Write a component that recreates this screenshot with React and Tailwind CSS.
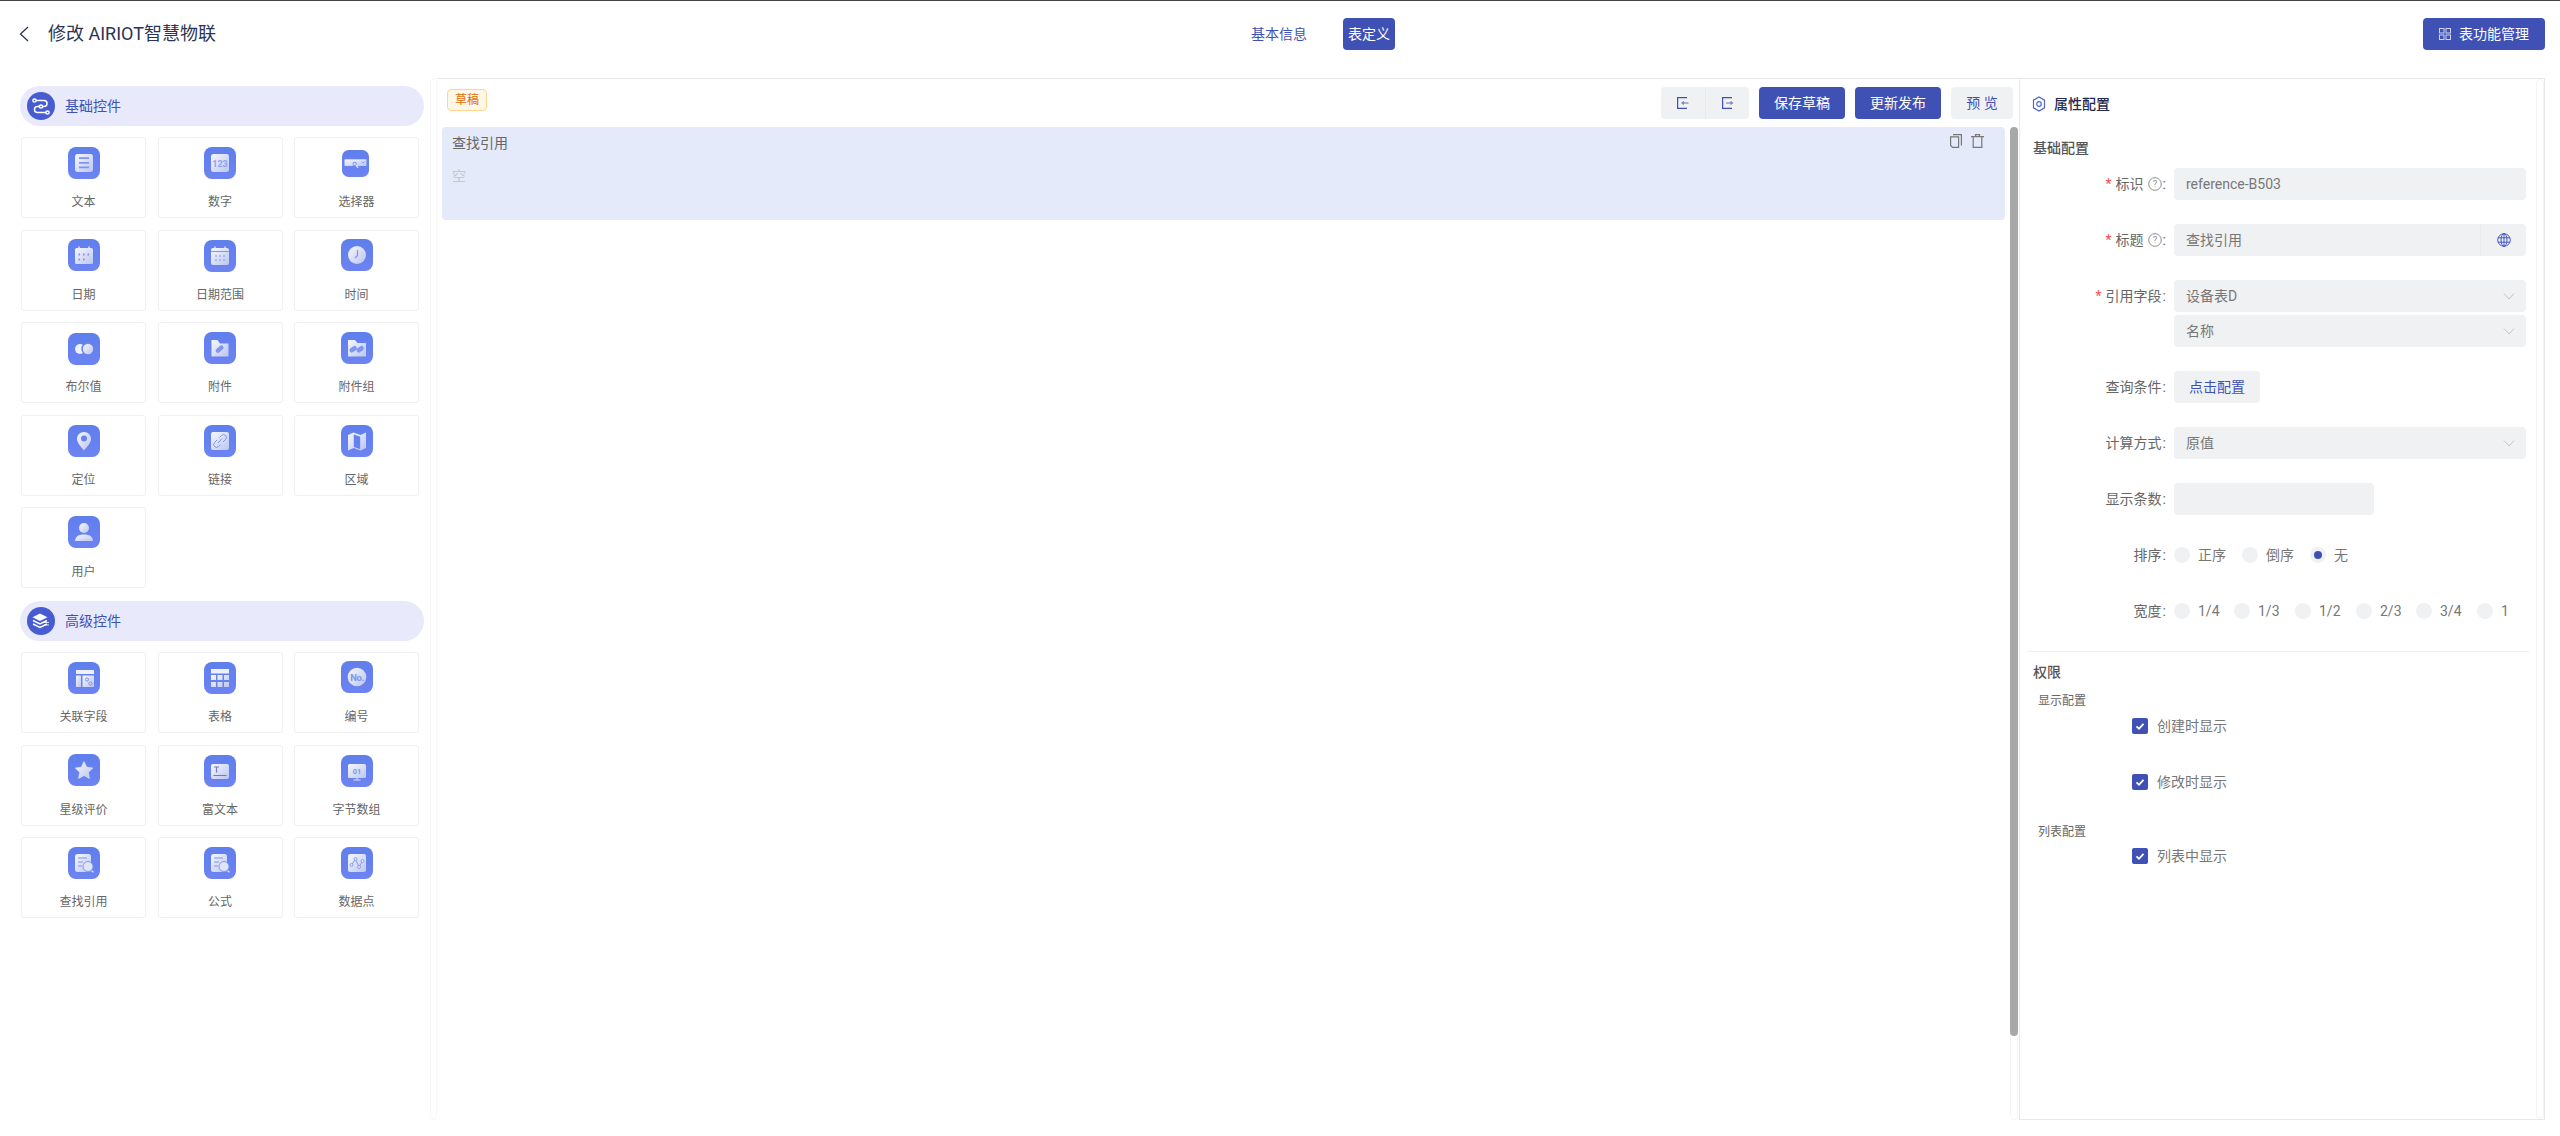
import React from 'react';

const BLUE = '#3f51b5';
const LINE = '#7f96ee';

function Tile({ small, children }) {
  return (
    <svg viewBox="0 0 32 32" className={small ? 'w-[27px] h-[27px]' : 'w-8 h-8'}>
      <defs>
        <linearGradient id="tileBg" x1="0" y1="0" x2="0" y2="1">
          <stop offset="0" stopColor="#5f7fec" />
          <stop offset="1" stopColor="#6d83f2" />
        </linearGradient>
        <linearGradient id="tf" x1="0" y1="0" x2="1" y2="1">
          <stop offset="0" stopColor="#f6f7fd" />
          <stop offset="1" stopColor="#bcc6ee" />
        </linearGradient>
      </defs>
      <rect width="32" height="32" rx="8" fill="url(#tileBg)" />
      {children}
    </svg>
  );
}

const docSearch = (
  <>
    <rect x="7" y="7" width="16" height="18" rx="2.5" fill="url(#tf)" />
    <path d="M10 11h9M10 15h5M10 19h4" stroke={LINE} strokeWidth="1.2" />
    <circle cx="20" cy="19.5" r="5" fill="#dfe4f8" stroke={LINE} strokeWidth="1" />
    <path d="M23.5 23.5l2 1.8" stroke="#dfe4f8" strokeWidth="1.2" />
  </>
);

const icons = {
  text: (
    <>
      <rect x="7" y="7" width="18" height="18" rx="2.5" fill="url(#tf)" />
      <path d="M11 11.2h10M11 15.8h10M11 20.4h10" stroke={LINE} strokeWidth="1.7" />
    </>
  ),
  number: (
    <>
      <rect x="7" y="7" width="18" height="18" rx="2.5" fill="url(#tf)" />
      <text x="16" y="19.5" textAnchor="middle" fontSize="9" fontWeight="700" fontFamily="Roboto, sans-serif" fill="#8ea2f0">123</text>
    </>
  ),
  select: (
    <>
      <path d="M3 11h26v8H3z" fill="url(#tf)" />
      <circle cx="15" cy="16.5" r="2" fill="none" stroke={LINE} strokeWidth="1.2" />
      <path d="M16.5 18l2.5 3" stroke="#dfe4f8" strokeWidth="1.6" />
      <path d="M23 13.5l2 2 2-2" fill="none" stroke={LINE} strokeWidth="1.1" />
    </>
  ),
  date: (
    <>
      <rect x="7" y="9" width="18" height="16" rx="1.5" fill="url(#tf)" />
      <path d="M11 7.5v3M21 7.5v3" stroke="#e8ebfa" strokeWidth="1.4" />
      <path d="M10.5 15.5h1.6M15 15.5h1.6M19.5 15.5h1.6M10.5 20.5h1.6M15 20.5h1.6" stroke={LINE} strokeWidth="1.8" />
    </>
  ),
  range: (
    <>
      <rect x="7" y="8" width="18" height="17" rx="2" fill="url(#tf)" />
      <path d="M11 6.5v3M21 6.5v3" stroke="#e8ebfa" strokeWidth="1.3" />
      <path d="M7 11.5h18" stroke={LINE} strokeWidth="1" />
      <path d="M11 16h2M15 16h2M19 16h2M11 20h2M15 20h2M19 20h2" stroke={LINE} strokeWidth="1.2" />
    </>
  ),
  time: (
    <>
      <circle cx="16" cy="16" r="9" fill="url(#tf)" />
      <path d="M16.5 11v5.5l-2.5 2.5" fill="none" stroke={LINE} strokeWidth="1.2" />
    </>
  ),
  bool: (
    <>
      <circle cx="12" cy="16" r="5" fill="#eef0fb" />
      <circle cx="19.5" cy="16" r="6.2" fill={'#6582ef'} />
      <circle cx="20" cy="16" r="5.2" fill="url(#tf)" />
    </>
  ),
  attach: (
    <>
      <path d="M7.5 8h6l2.5 3.5h8.5v13h-17z" fill="url(#tf)" />
      <rect x="11" y="15" width="9" height="4.4" rx="2.2" transform="rotate(-40 15.5 17)" fill={LINE} />
    </>
  ),
  attachGroup: (
    <>
      <path d="M7 8h7l2.5 3h8.5v13.5h-18z" fill="url(#tf)" />
      <rect x="8" y="15" width="8" height="4.6" rx="2.3" transform="rotate(-35 12 17)" fill={LINE} />
      <rect x="15" y="15" width="8" height="4.6" rx="2.3" transform="rotate(-35 19 17)" fill={LINE} />
    </>
  ),
  location: (
    <>
      <path d="M16 7c-4 0-7 3-7 7 0 4 4.5 8.500 7 11.500 2.500-3 7-7.500 7-11.500 0-4-3-7-7-7z" fill="url(#tf)" />
      <circle cx="16" cy="13.500" r="3" fill="#6582ef" />
    </>
  ),
  link: (
    <>
      <rect x="7" y="7" width="18" height="18" rx="2" fill="url(#tf)" />
      <path d="M14 18l4-4.500M15.500 12.500l2-2a2.800 2.800 0 0 1 4 4l-2.500 2.500M16.500 19.500l-2 2a2.800 2.800 0 0 1-4-4l2.500-2.500" fill="none" stroke={LINE} strokeWidth="1" />
    </>
  ),
  area: <path d="M7 10l5.500-2.500 7 2.500 5.500-2.500v15.500l-5.500 2.500-7-2.500-5.500 2.500zM12.800 9.500v12.500l6.400 2.300v-12.500z" fill="url(#tf)" fillRule="evenodd" />,
  user: (
    <>
      <circle cx="16" cy="12" r="5" fill="url(#tf)" />
      <path d="M7 25c.4-4.500 3.500-6.500 9-6.500s8.600 2 9 6.500z" fill="url(#tf)" />
    </>
  ),
  relation: (
    <>
      <path d="M8 8h18v4H8z" fill="#eef0fb" />
      <path d="M8 13.500h5v11.500H8z" fill="url(#tf)" />
      <path d="M14.500 13.500H26v11.500H14.500z" fill="url(#tf)" />
      <circle cx="19" cy="17.500" r="1.600" fill="none" stroke={LINE} />
      <circle cx="22.500" cy="21.500" r="1.600" fill="none" stroke={LINE} />
    </>
  ),
  table: (
    <>
      <path d="M7 7h18v4.500H7z" fill="#eef0fb" />
      <path d="M7 13h5v5H7zM13.500 13h5v5h-5zM20 13h5v5h-5zM7 20h5v5H7zM13.500 20h5v5h-5zM20 20h5v5h-5z" fill="url(#tf)" />
    </>
  ),
  serial: (
    <>
      <circle cx="16" cy="16" r="9.300" fill="url(#tf)" />
      <text x="16" y="19.500" textAnchor="middle" fontSize="9.500" fontWeight="700" fontFamily="Roboto, sans-serif" fill="#7f96ee" letterSpacing="-.4">No.</text>
    </>
  ),
  star: <path d="M16 7.500l2.700 5.600 6.100.9-4.400 4.300 1 6.100-5.400-2.900-5.400 2.900 1-6.100-4.400-4.300 6.100-.9z" fill="url(#tf)" strokeLinejoin="round" stroke="#dfe4f8" strokeWidth=".6" />,
  rich: (
    <>
      <rect x="7" y="9" width="18" height="15" rx="2" fill="url(#tf)" />
      <path d="M10 12h5M12.500 12v5.500M9.500 20.500h13" fill="none" stroke={BLUE} strokeOpacity=".7" strokeWidth="1.200" />
    </>
  ),
  bytes: (
    <>
      <rect x="7" y="9" width="18" height="14" rx="1.500" fill="url(#tf)" />
      <path d="M16 23v1.800M12.500 25h7" stroke="#dfe4f8" strokeWidth="1" />
      <text x="16" y="18.700" textAnchor="middle" fontSize="7.500" fontWeight="700" fontFamily="Roboto, sans-serif" fill="#7f96ee">01</text>
    </>
  ),
  lookup: docSearch,
  formula: docSearch,
  datapoint: (
    <>
      <rect x="7" y="7" width="18" height="18" rx="2" fill="url(#tf)" />
      <path d="M10.500 18l4-6 3.500 8 3.500-6" fill="none" stroke={LINE} strokeWidth=".9" />
      <circle cx="10.500" cy="18" r="1.500" fill="#dfe4f8" stroke={LINE} strokeWidth=".8" />
      <circle cx="14.500" cy="12" r="1.500" fill="#dfe4f8" stroke={LINE} strokeWidth=".8" />
      <circle cx="18" cy="20" r="1.500" fill="#dfe4f8" stroke={LINE} strokeWidth=".8" />
      <circle cx="21.500" cy="14" r="1.500" fill="#dfe4f8" stroke={LINE} strokeWidth=".8" />
    </>
  ),
};

const basic = [
  { name: '文本', icon: 'text', top: 'mt-[9px]' },
  { name: '数字', icon: 'number', top: 'mt-[9px]' },
  { name: '选择器', icon: 'select', top: 'mt-[12px]', small: true },
  { name: '日期', icon: 'date', top: 'mt-[8px]' },
  { name: '日期范围', icon: 'range', top: 'mt-[9px]' },
  { name: '时间', icon: 'time', top: 'mt-[8px]' },
  { name: '布尔值', icon: 'bool', top: 'mt-[10px]' },
  { name: '附件', icon: 'attach', top: 'mt-[9px]' },
  { name: '附件组', icon: 'attachGroup', top: 'mt-[9px]' },
  { name: '定位', icon: 'location', top: 'mt-[9px]' },
  { name: '链接', icon: 'link', top: 'mt-[9px]' },
  { name: '区域', icon: 'area', top: 'mt-[9px]' },
  { name: '用户', icon: 'user', top: 'mt-[8px]' },
];

const advanced = [
  { name: '关联字段', icon: 'relation', top: 'mt-[9px]' },
  { name: '表格', icon: 'table', top: 'mt-[9px]' },
  { name: '编号', icon: 'serial', top: 'mt-[8px]' },
  { name: '星级评价', icon: 'star', top: 'mt-[8px]' },
  { name: '富文本', icon: 'rich', top: 'mt-[9px]' },
  { name: '字节数组', icon: 'bytes', top: 'mt-[9px]' },
  { name: '查找引用', icon: 'lookup', top: 'mt-[9px]' },
  { name: '公式', icon: 'formula', top: 'mt-[9px]' },
  { name: '数据点', icon: 'datapoint', top: 'mt-[9px]' },
];

function SectionPill({ title, children }) {
  return (
    <div className="w-[404px] h-10 rounded-[20px] bg-[#e8e9fb] flex items-center pl-[7px] gap-[10px]">
      <svg viewBox="0 0 28 28" className="w-7 h-7">
        <circle cx="14" cy="14" r="14" fill="#465cd0" />
        {children}
      </svg>
      <span className="text-sm text-[#3f51b5]">{title}</span>
    </div>
  );
}

function WidgetGrid({ items }) {
  return (
    <div className="grid grid-cols-[125px_125px_125px] auto-rows-[81px] gap-[11.5px] ml-px mt-[11px]">
      {items.map((item) => (
        <div key={item.name} className="border border-[#f0f0f0] rounded-[3px] flex flex-col items-center bg-white">
          <div className={`h-[54px] ${item.small ? 'pr-[2px]' : ''}`}>
            <div className={item.top}>
              <Tile small={item.small}>{icons[item.icon]}</Tile>
            </div>
          </div>
          <span className="text-xs leading-[18px] mt-[1px] text-[#666]">{item.name}</span>
        </div>
      ))}
    </div>
  );
}

function Chevron() {
  return (
    <svg viewBox="0 0 12 12" className="w-3 h-3 mr-[11px]" fill="none" stroke="#c4c4c4" strokeWidth="1">
      <path d="M1 3.500l5 5.500 5-5.500" />
    </svg>
  );
}

function Help() {
  return (
    <svg viewBox="0 0 14 14" className="w-[14px] h-[14px] ml-1 mr-px" fill="none">
      <circle cx="7" cy="7" r="6.300" stroke="#8c8c8c" />
      <text x="7" y="10.300" textAnchor="middle" fontSize="9.500" fill="#8c8c8c" fontFamily="Roboto, sans-serif">?</text>
    </svg>
  );
}

function FieldRow({ label, required, help, children }) {
  return (
    <div className="flex items-start mb-6">
      <div className="w-[146px] h-8 flex items-center justify-end text-sm text-[#666]">
        {required && <span className="text-[#ff4d4f] mr-1">*</span>}
        <span>{label}</span>
        {help && <Help />}
        <span className={help ? '' : 'ml-px'}>:</span>
      </div>
      <div className="ml-2">{children}</div>
    </div>
  );
}

function Box({ value, width = 'w-[352px]', children }) {
  return (
    <div className={`${width} h-8 rounded bg-[#f0f1f3] flex items-center justify-between text-sm text-[#777]`}>
      <span className="pl-3">{value}</span>
      {children}
    </div>
  );
}

function Radio({ label, checked, gap }) {
  return (
    <div className={`flex items-center ${gap}`}>
      <span className="w-4 h-4 rounded-full bg-[#f0f1f3] flex items-center justify-center">
        {checked && <span className="w-2 h-2 rounded-full bg-[#3f51b5]" />}
      </span>
      <span className="text-sm text-[#777] ml-2">{label}</span>
    </div>
  );
}

function Check({ label }) {
  return (
    <div className="flex items-center h-4 pl-[112px] gap-[9px]">
      <span className="w-4 h-4 rounded-[2px] bg-[#3f51b5] flex items-center justify-center">
        <svg viewBox="0 0 12 12" className="w-3 h-3" fill="none" stroke="#fff" strokeWidth="1.800">
          <path d="M2.500 6.300l2.500 2.500 4.500-5" />
        </svg>
      </span>
      <span className="text-sm text-[#777]">{label}</span>
    </div>
  );
}

function Track({ children }) {
  return <div className="w-2 shrink-0 border border-[#f5f5f5] rounded-[4px]">{children}</div>;
}

export default function App() {
  return (
    <div className="w-full h-[1136px] bg-white border-t border-[#444] flex flex-col font-['Roboto','Noto_Sans_CJK_SC',sans-serif]">
      {/* header */}
      <header className="h-[77px] shrink-0 flex items-start pt-[17px] pr-[15px]">
        <div className="w-[1251px] h-8 flex items-center pl-[19px]">
          <svg viewBox="0 0 10 16" className="w-[10px] h-4" fill="none" stroke="#2b3553" strokeWidth="1.300">
            <path d="M9 1L1.500 8 9 15" />
          </svg>
          <span className="ml-[19px] text-lg text-[#2b3553]">修改 AIRIOT智慧物联</span>
        </div>
        <div className="h-8 flex items-center text-sm">
          <span className="text-[#3f51b5]">基本信息</span>
          <span className="ml-9 h-8 w-[52px] rounded bg-[#3f51b5] text-white flex items-center justify-center">表定义</span>
        </div>
        <button className="ml-auto w-[122px] h-8 rounded bg-[#3f51b5] text-white text-sm flex items-center pl-4 gap-2">
          <svg viewBox="0 0 12 12" className="w-3 h-3" fill="none" stroke="#cfd5f3" strokeWidth="1">
            <rect x=".5" y=".5" width="4.500" height="4.500" />
            <rect x="7" y=".5" width="4.500" height="4.500" />
            <rect x=".5" y="7" width="4.500" height="4.500" />
            <rect x="7" y="7" width="4.500" height="4.500" />
          </svg>
          表功能管理
        </button>
      </header>

      <main className="h-[1042px] shrink-0 flex">
        {/* widgets */}
        <aside className="w-[430px] shrink-0 pl-5 pt-2">
          <SectionPill title="基础控件">
            <g fill="none" stroke="#fff" strokeWidth="1.500">
              <path d="M9 8.500h8a3 3 0 0 1 0 6h-6.500a3 3 0 0 0 0 6H19" />
              <circle cx="7.500" cy="8.500" r="1.600" />
              <circle cx="14" cy="14.500" r="1.600" fill="#465cd0" />
              <circle cx="20.500" cy="20.500" r="1.600" />
            </g>
          </SectionPill>
          <WidgetGrid items={basic} />
          <div className="mt-[13px]">
            <SectionPill title="高级控件">
              <path d="M13 6.500l7.500 3.800-7.500 3.800-7.500-3.800z" fill="#fff" />
              <path d="M6 13.500l7 3.500 7-3.500M6 17l7 3.500 7-3.500" fill="none" stroke="#fff" strokeWidth="1.500" />
              <path d="M17 15.500h5M17 18h5" stroke="#fff" strokeWidth=".8" />
            </SectionPill>
          </div>
          <WidgetGrid items={advanced} />
        </aside>
        <div className="w-[7px] shrink-0 border border-[#f7f7f7] rounded-[4px]" />

        {/* canvas */}
        <section className="w-[1582px] shrink-0 border-t border-[#e8e8e8] flex flex-col">
          <div className="h-12 shrink-0 pt-2 pl-[10px] pr-[6px] flex items-start">
            <span className="mt-[2px] w-10 h-[22px] rounded border border-[#ffd591] bg-[#fff7e6] text-xs text-[#e06c00] flex items-center justify-center">草稿</span>
            <div className="ml-auto flex items-center text-sm">
              <button className="w-[44px] h-8 rounded-l bg-[#f0f1f3] flex items-center justify-center">
                <svg viewBox="0 0 12 12" className="w-3 h-3" fill="none" stroke={BLUE} strokeWidth="1.200">
                  <path d="M10 .6H.6v10.800H10" />
                  <path d="M11.500 6H6" stroke="#8089b8" strokeWidth="1.200" />
                  <path d="M7 3.800L4 6l3 2.200z" fill="#8089b8" stroke="none" />
                </svg>
              </button>
              <button className="w-[44px] h-8 rounded-r bg-[#f0f1f3] border-l border-[#e8e9ec] flex items-center justify-center">
                <svg viewBox="0 0 12 12" className="w-3 h-3" fill="none" stroke={BLUE} strokeWidth="1.200">
                  <path d="M10 .6H.6v10.800H10" />
                  <path d="M4 6h5" stroke="#8089b8" strokeWidth="1.200" />
                  <path d="M8.500 3.800l3 2.200-3 2.200z" fill="#8089b8" stroke="none" />
                </svg>
              </button>
              <button className="ml-[10px] w-[86px] h-8 rounded bg-[#3f51b5] text-white">保存草稿</button>
              <button className="ml-[10px] w-[86px] h-8 rounded bg-[#3f51b5] text-white">更新发布</button>
              <button className="ml-[10px] w-[62px] h-8 rounded bg-[#f0f1f3] text-[#3f51b5]">预 览</button>
            </div>
          </div>
          <div className="flex-1 flex min-h-0">
            <div className="w-[1573px] shrink-0 pl-[5px] pr-[5px]">
              <div className="h-[93px] rounded bg-[#e5eafa] pl-[10px] pr-[21px] pt-[5px]">
                <div className="flex items-start justify-between">
                  <span className="text-sm leading-[22px] text-[#666]">查找引用</span>
                  <div className="flex gap-[9px] pt-[2px]">
                    <svg viewBox="0 0 12 14" className="w-3 h-[14px]" fill="none" stroke="#777" strokeWidth="1.200">
                      <path d="M3 .6h8.400v10.800M.6 2.800h8v10.600H2.500L.6 11.500z" />
                    </svg>
                    <svg viewBox="0 0 13 14" className="w-[13px] h-[14px]" fill="none" stroke="#777" strokeWidth="1.200">
                      <path d="M0 2.600h13M4.500 2.600V.6h4v2M2.200 2.600v10.800h8.600V2.600" />
                    </svg>
                  </div>
                </div>
                <div className="mt-[11px] text-sm leading-[22px] text-[#c8c8c8]">空</div>
              </div>
            </div>
            <Track>
              <div className="h-[909px] bg-[#a8a8a8] -mx-px -mt-px rounded-[4px]" />
            </Track>
          </div>
        </section>

        {/* properties */}
        <section className="flex-1 mr-[15px] border border-[#e8e8e8] flex">
          <div className="flex-1">
            <div className="h-[50px] flex items-center pl-3">
              <svg viewBox="0 0 14 16" className="w-[14px] h-4" fill="none" stroke="#4f63c9" strokeWidth="1.200">
                <path d="M7 1l5.500 3.200v7.600L7 15l-5.500-3.200V4.200z" />
                <circle cx="7" cy="8" r="2.300" />
              </svg>
              <span className="ml-2 text-sm font-medium text-[#1f2a4d]">属性配置</span>
            </div>
            <div className="mt-2 pl-[13px] text-sm font-medium leading-[22px] text-[#555]">基础配置</div>
            <div className="mt-[9px]">
              <FieldRow label="标识" required help>
                <Box value="reference-B503" />
              </FieldRow>
              <FieldRow label="标题" required help>
                <Box value="查找引用">
                  <span className="w-[46px] h-8 border-l border-[#e9eaec] flex items-center justify-center">
                    <svg viewBox="0 0 14 14" className="w-[14px] h-[14px]" fill="none" stroke="#4358c4" strokeWidth="1">
                      <circle cx="7" cy="7" r="6.300" />
                      <ellipse cx="7" cy="7" rx="3" ry="6.300" />
                      <path d="M7 .7v12.600M1 4.800h12M1 9.200h12" />
                    </svg>
                  </span>
                </Box>
              </FieldRow>
              <FieldRow label="引用字段" required>
                <div className="flex flex-col gap-[3px]">
                  <Box value="设备表D"><Chevron /></Box>
                  <Box value="名称"><Chevron /></Box>
                </div>
              </FieldRow>
              <FieldRow label="查询条件">
                <button className="w-[86px] h-8 rounded bg-[#f0f1f3] text-sm text-[#3f51b5]">点击配置</button>
              </FieldRow>
              <FieldRow label="计算方式">
                <Box value="原值"><Chevron /></Box>
              </FieldRow>
              <FieldRow label="显示条数">
                <Box value="" width="w-[200px]" />
              </FieldRow>
              <FieldRow label="排序">
                <div className="h-8 flex items-center">
                  <Radio label="正序" gap="mr-4" />
                  <Radio label="倒序" gap="mr-4" />
                  <Radio label="无" checked />
                </div>
              </FieldRow>
              <FieldRow label="宽度">
                <div className="h-8 flex items-center w-[352px]">
                  <div className="w-[60px]"><Radio label="1/4" /></div>
                  <div className="w-[61px]"><Radio label="1/3" /></div>
                  <div className="w-[61px]"><Radio label="1/2" /></div>
                  <div className="w-[60px]"><Radio label="2/3" /></div>
                  <div className="w-[61px]"><Radio label="3/4" /></div>
                  <Radio label="1" />
                </div>
              </FieldRow>
            </div>
            <div className="ml-2 w-[501px] border-t border-[#eeeeee]" />
            <div className="mt-[9px] pl-[13px] text-sm font-medium leading-[22px] text-[#555]">权限</div>
            <div className="mt-[9px] pl-[18px] text-xs leading-[18px] text-[#666]">显示配置</div>
            <div className="mt-2"><Check label="创建时显示" /></div>
            <div className="mt-10"><Check label="修改时显示" /></div>
            <div className="mt-[33px] pl-[18px] text-xs leading-[18px] text-[#666]">列表配置</div>
            <div className="mt-[7px]"><Check label="列表中显示" /></div>
          </div>
          <Track />
        </section>
      </main>
    </div>
  );
}
